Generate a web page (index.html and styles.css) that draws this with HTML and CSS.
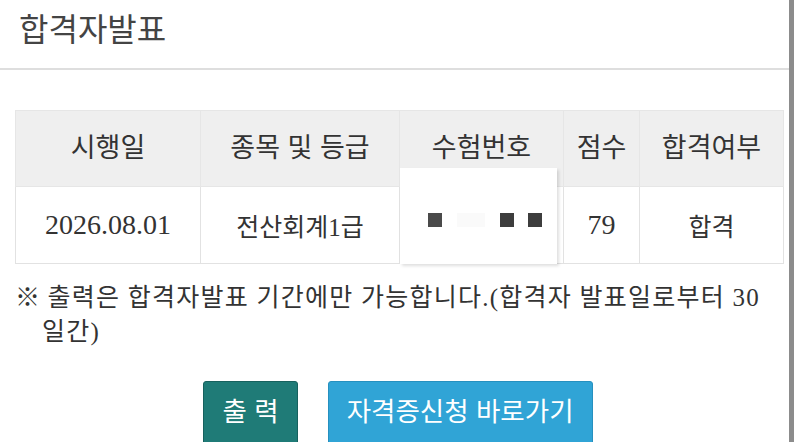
FILE: index.html
```html
<!DOCTYPE html>
<html lang="ko">
<head>
<meta charset="utf-8">
<title>합격자발표</title>
<link rel="stylesheet" href="styles.css">
</head>
<body>
<div class="screen">
  <div class="page">
    <div class="header"><h1 class="title">합격자발표</h1></div>
    <div class="content">
      <table class="result">
        <colgroup>
          <col class="c1"><col class="c2"><col class="c3"><col class="c4"><col class="c5">
        </colgroup>
        <thead>
          <tr><th>시행일</th><th>종목 및 등급</th><th>수험번호</th><th>점수</th><th>합격여부</th></tr>
        </thead>
        <tbody>
          <tr>
            <td class="num">2026.08.01</td>
            <td>전산회계1급</td>
            <td class="masked"><div class="mask"><span class="sq"></span><span class="sq faint"></span><span class="sq"></span><span class="sq"></span></div></td>
            <td class="num">79</td>
            <td>합격</td>
          </tr>
        </tbody>
      </table>
      <p class="note"><span class="mark">※</span> 출력은 합격자발표 기간에만 가능합니다.(합격자 발표일로부터 30 일간)</p>
      <div class="actions">
        <button class="btn btn-print">출 력</button>
        <button class="btn btn-apply">자격증신청 바로가기</button>
      </div>
    </div>
  </div>
  <div class="bar"></div>
</div>
</body>
</html>
```

FILE: styles.css
```css
html, body {
  margin: 0;
  padding: 0;
  background: #fff;
  overflow: hidden;
}
body {
  font-family: "Liberation Serif", "Noto Sans CJK KR", serif;
  color: #333;
}
.screen {
  display: flex;
  width: 800px;
  height: 442px;
  overflow: hidden;
}
.page {
  width: 789px;
  flex: none;
}
.bar {
  width: 5px;
  flex: none;
  background: #8c8c8c;
}
.header {
  height: 70px;
  border-bottom: 2px solid #dedede;
  box-sizing: border-box;
  padding-left: 19px;
}
.title {
  margin: 0;
  font-family: "Noto Sans CJK KR", sans-serif;
  font-weight: 400;
  font-size: 32px;
  line-height: 54px;
  color: #444;
}
.content {
  padding: 40px 6px 0 15px;
}
.result {
  width: 768px;
  border-collapse: collapse;
  table-layout: fixed;
}
.c1 { width: 185px; }
.c2 { width: 199px; }
.c3 { width: 164px; }
.c4 { width: 76px; }
.c5 { width: 144px; }
.result th, .result td {
  height: 76px;
  padding: 0;
  border: 1px solid #e2e2e2;
  text-align: center;
  vertical-align: middle;
  font-weight: 400;
  font-size: 25px;
  color: #333;
}
.result th {
  background: #efefef;
  font-family: "Noto Sans CJK KR", sans-serif;
  font-size: 27px;
  border-color: #e6e6e6;
  padding-bottom: 6px;
  box-sizing: border-box;
}
.result td.num {
  font-size: 28px;
}
.masked {
  position: relative;
}
.mask {
  position: absolute;
  left: 0;
  top: -19px;
  width: 157px;
  height: 96px;
  background: #fff;
  box-shadow: 2px 2px 3px rgba(0, 0, 0, 0.13);
  display: flex;
  align-items: center;
  padding: 8px 0 0 28px;
  box-sizing: border-box;
}
.sq {
  width: 14px;
  height: 14px;
  background: #3d3d3d;
  flex: none;
}
.sq:first-child { background: #4a4a4a; }
.sq.faint {
  width: 28px;
  background: #fafafa;
  margin: 0 15px 0 15px;
}
.sq + .sq:not(.faint) + .sq { margin-left: 14px; }
.note {
  margin: 17px 0 0;
  padding-left: 27px;
  text-indent: -27px;
  font-size: 25px;
  line-height: 34px;
  letter-spacing: 1.25px;
  color: #333;
}
.mark {
  letter-spacing: 0;
}
.actions {
  display: flex;
  justify-content: center;
  gap: 30px;
  margin-top: 32px;
  padding-right: 2px;
}
.btn {
  border: none;
  border-radius: 3px;
  color: #fff;
  font-family: "Noto Sans CJK KR", sans-serif;
  font-size: 26.5px;
  line-height: 38px;
  padding: 9px 18px 20px;
  cursor: pointer;
}
.btn-print {
  background: #1f7b77;
  border: 1px solid #17615e;
}
.btn-apply {
  background: #30a4d6;
  border: 1px solid #2690bf;
}
```
